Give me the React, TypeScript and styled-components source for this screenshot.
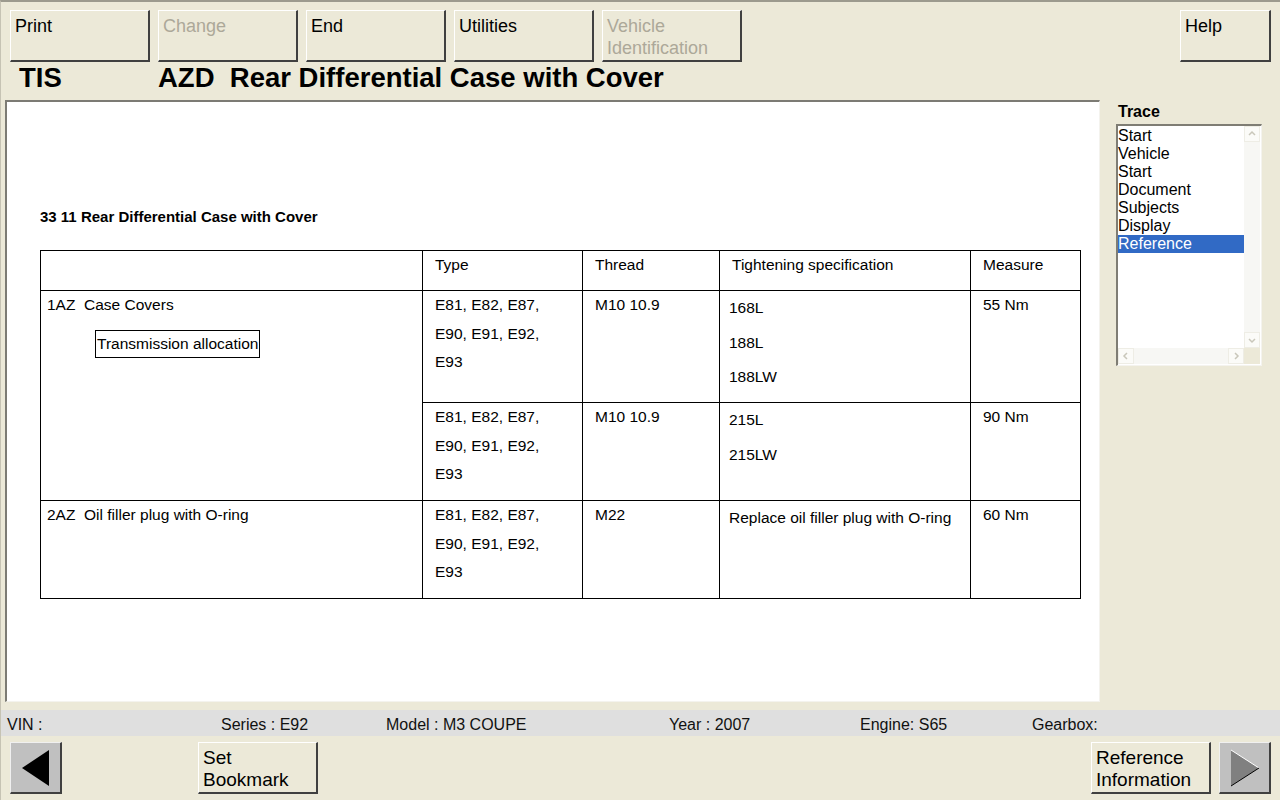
import styled, { createGlobalStyle } from 'styled-components';

const GlobalStyle = createGlobalStyle`
  html, body {
    margin: 0;
    padding: 0;
    background: #ece9d8;
  }
  body {
    font-family: 'Liberation Sans', Arial, sans-serif;
    color: #000;
  }
`;

const Frame = styled.div`
  width: 1280px;
  height: 800px;
  box-sizing: border-box;
  border-top: 2px solid #9c9a8e;
  border-left: 1px solid #c6c3b4;
  background: #ece9d8;
  display: flex;
  flex-direction: column;
  overflow: hidden;
`;

const Toolbar = styled.div`
  height: 60px;
  box-sizing: border-box;
  padding: 8px 9px 0 9px;
  display: flex;
  gap: 8px;
`;

const Spacer = styled.div<{ $w?: number }>`
  flex: ${(p) => (p.$w ? `0 0 ${p.$w}px` : '1')};
`;

const PanelButton = styled.button<{ $disabled?: boolean; $w?: number; $size?: number }>`
  width: ${(p) => p.$w ?? 140}px;
  height: 52px;
  box-sizing: border-box;
  margin: 0;
  padding: 4px 4px 0 4px;
  background: #ece9d8;
  border-style: solid;
  border-width: 1px 2px 2px 1px;
  border-color: #ffffff #404040 #404040 #ffffff;
  font-family: 'Liberation Sans', Arial, sans-serif;
  font-size: ${(p) => p.$size ?? 18}px;
  line-height: 22px;
  text-align: left;
  display: flex;
  flex-direction: column;
  justify-content: flex-start;
  color: ${(p) => (p.$disabled ? '#aca899' : '#000')};
  cursor: default;
`;

const TitleRow = styled.div`
  height: 38px;
  box-sizing: border-box;
  padding: 0 0 6px 18px;
  display: flex;
  align-items: center;
  font-size: 27.5px;
  font-weight: bold;
  white-space: pre;
`;

const Product = styled.span`
  width: 139px;
`;

const Main = styled.div`
  height: 602px;
  display: flex;
`;

const Sheet = styled.div`
  margin-left: 4px;
  width: 1095px;
  box-sizing: border-box;
  background: #fff;
  border-style: solid;
  border-width: 2px 1px 1px 2px;
  border-color: #7c7b74 #f4f3ee #f4f3ee #7c7b74;
  padding: 107px 0 0 33px;
`;

const SheetHeading = styled.div`
  font-size: 15px;
  font-weight: bold;
  line-height: 16px;
  margin-bottom: 25px;
`;

const SpecTable = styled.table`
  border-collapse: collapse;
  table-layout: fixed;
  width: 1040px;
  font-size: 15.5px;
`;

const Row = styled.tr<{ $h: number }>`
  height: ${(p) => p.$h}px;
`;

const Cell = styled.td<{ $pl?: number; $lh?: number }>`
  border: 1px solid #000;
  vertical-align: top;
  padding: 0 4px 0 ${(p) => p.$pl ?? 12}px;
  line-height: ${(p) => p.$lh ?? 28.5}px;
  white-space: pre;
`;

const Allocation = styled.div`
  display: inline-block;
  margin: 10px 0 0 48px;
  border: 1px solid #000;
  padding: 0 1px;
  line-height: 26px;
`;

const Side = styled.div`
  flex: 1;
  padding: 3px 0 0 16px;
`;

const TraceTitle = styled.div`
  font-size: 16px;
  font-weight: bold;
  line-height: 18px;
  padding-left: 2px;
  margin-bottom: 3px;
`;

const ListBox = styled.div`
  width: 146px;
  height: 242px;
  box-sizing: border-box;
  border-style: solid;
  border-width: 2px 1px 1px 2px;
  border-color: #7f7d74 #f4f3ee #f4f3ee #7f7d74;
  background: #fff;
  display: grid;
  grid-template-columns: 126px 16px;
  grid-template-rows: 222px 16px;
`;

const Items = styled.div`
  padding-top: 1px;
  font-size: 16px;
  line-height: 18px;
`;

const Item = styled.div<{ $selected?: boolean }>`
  background: ${(p) => (p.$selected ? '#316ac5' : 'transparent')};
  color: ${(p) => (p.$selected ? '#fff' : '#000')};
  white-space: nowrap;
`;

const ScrollTrack = styled.div<{ $vertical?: boolean }>`
  background: #f7f7f4;
  display: flex;
  flex-direction: ${(p) => (p.$vertical ? 'column' : 'row')};
  justify-content: space-between;
`;

const ScrollArrow = styled.div`
  width: 16px;
  height: 16px;
  box-sizing: border-box;
  border: 1px solid #eeede5;
  background: #fbfbf8;
  display: flex;
  align-items: center;
  justify-content: center;
`;

const Corner = styled.div`
  background: #ece9d8;
`;

const StatusBar = styled.div`
  margin-top: 8px;
  height: 26px;
  box-sizing: border-box;
  padding: 3px 0 0 6px;
  background: #dfdfdf;
  display: flex;
  align-items: center;
  font-size: 16px;
  color: #111;
`;

const StatusItem = styled.span<{ $w?: number }>`
  width: ${(p) => (p.$w ? `${p.$w}px` : 'auto')};
  white-space: pre;
`;

const BottomBar = styled.div`
  padding: 6px 9px 0 9px;
  display: flex;
  gap: 8px;
`;

const ArrowButton = styled.button`
  width: 52px;
  height: 52px;
  margin: 0;
  padding: 0;
  box-sizing: border-box;
  background: #c0c0c0;
  border-style: solid;
  border-width: 1px 2px 2px 1px;
  border-color: #f0f0f0 #404040 #404040 #f0f0f0;
  display: flex;
  align-items: center;
  justify-content: center;
`;

const Chevron = ({ dir }: { dir: 'up' | 'down' | 'left' | 'right' }) => {
  const d = {
    up: 'M2 6 L5 3 L8 6',
    down: 'M2 4 L5 7 L8 4',
    left: 'M6 2 L3 5 L6 8',
    right: 'M4 2 L7 5 L4 8',
  }[dir];
  return (
    <svg width="10" height="10" viewBox="0 0 10 10">
      <path d={d} fill="none" stroke="#c9c7ba" strokeWidth="1.5" />
    </svg>
  );
};

const trace = ['Start', 'Vehicle', 'Start', 'Document', 'Subjects', 'Display', 'Reference'];

const models = 'E81, E82, E87,\nE90, E91, E92,\nE93';

export default function App() {
  return (
    <>
      <GlobalStyle />
      <Frame>
        <Toolbar>
          <PanelButton>Print</PanelButton>
          <PanelButton $disabled>Change</PanelButton>
          <PanelButton>End</PanelButton>
          <PanelButton>Utilities</PanelButton>
          <PanelButton $disabled>
            <span>Vehicle</span>
            <span>Identification</span>
          </PanelButton>
          <Spacer />
          <PanelButton $w={91}>Help</PanelButton>
        </Toolbar>

        <TitleRow>
          <Product>TIS</Product>
          <span>AZD  Rear Differential Case with Cover</span>
        </TitleRow>

        <Main>
          <Sheet>
            <SheetHeading>33 11 Rear Differential Case with Cover</SheetHeading>
            <SpecTable>
              <colgroup>
                <col style={{ width: 382 }} />
                <col style={{ width: 160 }} />
                <col style={{ width: 137 }} />
                <col style={{ width: 251 }} />
                <col style={{ width: 110 }} />
              </colgroup>
              <tbody>
                <Row $h={40}>
                  <Cell $pl={6}></Cell>
                  <Cell $lh={28}>Type</Cell>
                  <Cell $lh={28}>Thread</Cell>
                  <Cell $lh={28}>Tightening specification</Cell>
                  <Cell $lh={28}>Measure</Cell>
                </Row>
                <Row $h={112}>
                  <Cell $pl={6} rowSpan={2}>
                    <div>1AZ  Case Covers</div>
                    <Allocation>Transmission allocation</Allocation>
                  </Cell>
                  <Cell>{models}</Cell>
                  <Cell>M10 10.9</Cell>
                  <Cell $lh={34.5} $pl={9}>{'168L\n188L\n188LW'}</Cell>
                  <Cell>55 Nm</Cell>
                </Row>
                <Row $h={98}>
                  <Cell>{models}</Cell>
                  <Cell>M10 10.9</Cell>
                  <Cell $lh={34.5} $pl={9}>{'215L\n215LW'}</Cell>
                  <Cell>90 Nm</Cell>
                </Row>
                <Row $h={98}>
                  <Cell $pl={6}>2AZ  Oil filler plug with O-ring</Cell>
                  <Cell>{models}</Cell>
                  <Cell>M22</Cell>
                  <Cell $lh={34.5} $pl={9}>Replace oil filler plug with O-ring</Cell>
                  <Cell>60 Nm</Cell>
                </Row>
              </tbody>
            </SpecTable>
          </Sheet>

          <Side>
            <TraceTitle>Trace</TraceTitle>
            <ListBox>
              <Items>
                {trace.map((t, i) => (
                  <Item key={i} $selected={i === trace.length - 1}>
                    {t}
                  </Item>
                ))}
              </Items>
              <ScrollTrack $vertical>
                <ScrollArrow>
                  <Chevron dir="up" />
                </ScrollArrow>
                <ScrollArrow>
                  <Chevron dir="down" />
                </ScrollArrow>
              </ScrollTrack>
              <ScrollTrack>
                <ScrollArrow>
                  <Chevron dir="left" />
                </ScrollArrow>
                <ScrollArrow>
                  <Chevron dir="right" />
                </ScrollArrow>
              </ScrollTrack>
              <Corner />
            </ListBox>
          </Side>
        </Main>

        <StatusBar>
          <StatusItem $w={214}>VIN :</StatusItem>
          <StatusItem $w={165}>Series : E92</StatusItem>
          <StatusItem $w={283}>Model : M3 COUPE</StatusItem>
          <StatusItem $w={191}>Year : 2007</StatusItem>
          <StatusItem $w={172}>Engine: S65</StatusItem>
          <StatusItem>Gearbox:</StatusItem>
        </StatusBar>

        <BottomBar>
          <ArrowButton>
            <svg width="30" height="40" viewBox="0 0 30 40">
              <polygon points="1,20 28,2 28,38" fill="#000" />
            </svg>
          </ArrowButton>
          <Spacer $w={120} />
          <PanelButton $w={120} $size={19}>
            <span>Set</span>
            <span>Bookmark</span>
          </PanelButton>
          <Spacer />
          <PanelButton $w={120} $size={19}>
            <span>Reference</span>
            <span>Information</span>
          </PanelButton>
          <ArrowButton>
            <svg width="32" height="40" viewBox="0 0 32 40">
              <polygon points="2,2 30,20 2,38" fill="#808080" />
              <polyline points="2,2 30,20" fill="none" stroke="#fff" strokeWidth="1" />
              <polyline points="30,20 2,38" fill="none" stroke="#000" strokeWidth="1" />
            </svg>
          </ArrowButton>
        </BottomBar>
      </Frame>
    </>
  );
}
